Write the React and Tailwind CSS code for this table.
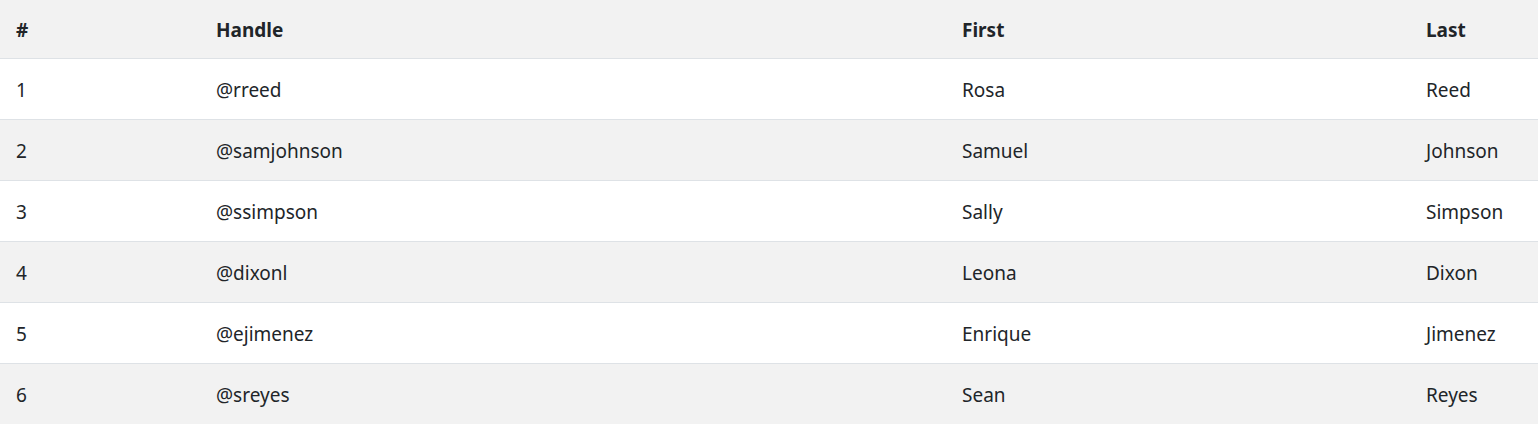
const rows = [
  ["1", "@rreed", "Rosa", "Reed"],
  ["2", "@samjohnson", "Samuel", "Johnson"],
  ["3", "@ssimpson", "Sally", "Simpson"],
  ["4", "@dixonl", "Leona", "Dixon"],
  ["5", "@ejimenez", "Enrique", "Jimenez"],
  ["6", "@sreyes", "Sean", "Reyes"],
];

export default function App() {
  return (
    <div className="w-[1538px] bg-white text-[#212529] text-[19px]" style={{ fontFamily: '"Noto Sans", "Open Sans", sans-serif' }}>
      <table className="w-full table-fixed border-collapse">
        <colgroup>
          <col className="w-[200px]" />
          <col className="w-[746px]" />
          <col className="w-[464px]" />
          <col />
        </colgroup>
        <thead>
          <tr className="bg-[#f2f2f2] h-[58px] border-b border-[#dee2e6]">
            <th className="text-left font-bold px-4 pt-[2px] pb-0">#</th>
            <th className="text-left font-bold px-4 pt-[2px] pb-0">Handle</th>
            <th className="text-left font-bold px-4 pt-[2px] pb-0">First</th>
            <th className="text-left font-bold px-4 pt-[2px] pb-0">Last</th>
          </tr>
        </thead>
        <tbody>
          {rows.map((r, i) => (
            <tr key={r[0]} className={(i % 2 === 1 ? "bg-[#f2f2f2]" : "bg-white") + " h-[61px] border-b border-[#dee2e6] last:border-b-0"}>
              {r.map((c, j) => (
                <td key={j} className="px-4 pt-[3px] pb-0">{c}</td>
              ))}
            </tr>
          ))}
        </tbody>
      </table>
    </div>
  );
}
